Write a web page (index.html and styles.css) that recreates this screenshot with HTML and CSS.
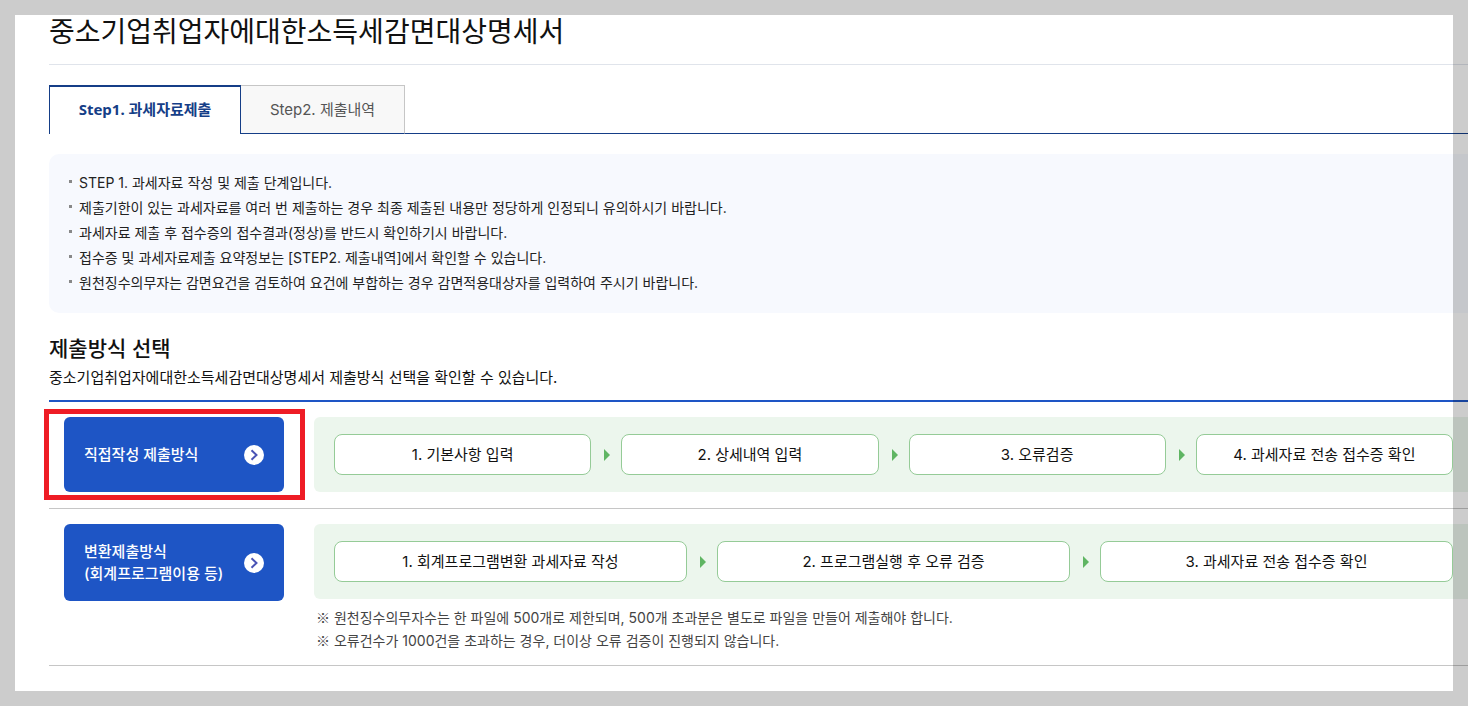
FILE: index.html
```html
<!DOCTYPE html>
<html lang="ko">

<head>
    <meta charset="UTF-8">
    <title>중소기업취업자에대한소득세감면대상명세서</title>
    <link rel="stylesheet" href="styles.css">
</head>

<body>
    <div id="content">
        <h1>중소기업취업자에대한소득세감면대상명세서</h1>

        <div class="tabs">
            <button type="button" class="tab on">Step1. 과세자료제출</button>
            <button type="button" class="tab">Step2. 제출내역</button>
        </div>

        <ul class="info">
            <li>STEP 1. 과세자료 작성 및 제출 단계입니다.</li>
            <li>제출기한이 있는 과세자료를 여러 번 제출하는 경우 최종 제출된 내용만 정당하게 인정되니 유의하시기 바랍니다.</li>
            <li>과세자료 제출 후 접수증의 접수결과(정상)를 반드시 확인하기시 바랍니다.</li>
            <li>접수증 및 과세자료제출 요약정보는 [STEP2. 제출내역]에서 확인할 수 있습니다.</li>
            <li>원천징수의무자는 감면요건을 검토하여 요건에 부합하는 경우 감면적용대상자를 입력하여 주시기 바랍니다.</li>
        </ul>

        <h2>제출방식 선택</h2>
        <p class="desc">중소기업취업자에대한소득세감면대상명세서 제출방식 선택을 확인할 수 있습니다.</p>

        <div class="methods">
            <div class="row">
                <div class="pick marked">
                    <button type="button" class="btn">
                        <span>직접작성 제출방식</span>
                        <svg width="20" height="20" viewBox="0 0 20 20">
                            <circle cx="10" cy="10" r="10" fill="#fff" />
                            <path d="M7.5 5.2l5 4.8-5 4.8" fill="none" stroke="#4a53b5" stroke-width="2" />
                        </svg>
                    </button>
                </div>
                <div class="flow">
                    <ol class="steps">
                        <li>1. 기본사항 입력</li>
                        <li>2. 상세내역 입력</li>
                        <li>3. 오류검증</li>
                        <li>4. 과세자료 전송 접수증 확인</li>
                    </ol>
                </div>
            </div>
            <div class="row">
                <div class="pick">
                    <button type="button" class="btn">
                        <span>변환제출방식<br>(회계프로그램이용 등)</span>
                        <svg width="20" height="20" viewBox="0 0 20 20">
                            <circle cx="10" cy="10" r="10" fill="#fff" />
                            <path d="M7.5 5.2l5 4.8-5 4.8" fill="none" stroke="#4a53b5" stroke-width="2" />
                        </svg>
                    </button>
                </div>
                <div class="flow">
                    <ol class="steps">
                        <li>1. 회계프로그램변환 과세자료 작성</li>
                        <li>2. 프로그램실행 후 오류 검증</li>
                        <li>3. 과세자료 전송 접수증 확인</li>
                    </ol>
                    <div class="notes">
                        <p><span class="mark">※</span> 원천징수의무자수는 한 파일에 500개로 제한되며, 500개 초과분은 별도로 파일을 만들어 제출해야 합니다.</p>
                        <p><span class="mark">※</span> 오류건수가 1000건을 초과하는 경우, 더이상 오류 검증이 진행되지 않습니다.</p>
                    </div>
                </div>
            </div>
        </div>
    </div>
    <div class="frame"></div>
</body>

</html>
```

FILE: styles.css
```css
* {
    box-sizing: border-box;
}

body {
    margin: 0;
    overflow: hidden;
    background-color: #fff;
    color: #111;
    font-family: Inter, "Noto Sans CJK KR", sans-serif;
    font-size: 15px;
}

h1, h2, p, ul, ol {
    margin: 0;
    padding: 0;
    font-weight: normal;
}

ul, ol {
    list-style: none;
}

button {
    font: inherit;
    cursor: pointer;
}

/* runs a little past the right edge of the window */
#content {
    margin: 0 -20px 0 49px;
    padding-top: 12px;
}

/* shaded edge over the whole page */
.frame {
    position: fixed;
    inset: 0;
    border: 15px solid rgba(0, 0, 0, 0.2);
    pointer-events: none;
}

h1 {
    padding-bottom: 12px;
    border-bottom: 1px solid #e0e4eb;
    font-size: 28px;
    line-height: 40px;
}

.tabs {
    display: flex;
    height: 49px;
    margin-top: 20px;
    border-bottom: 1px solid #153e87;
}

.tab {
    height: 49px;
    min-width: 164px;
    padding: 0 20px 2px;
    border: 1px solid #c6c6c6;
    border-left: 0;
    border-bottom-color: #153e87;
    background-color: #f8f8f8;
    color: #555;
}

.tab.on {
    min-width: 192px;
    padding-bottom: 4px;
    border: 1px solid #153e87;
    border-top-width: 2px;
    border-bottom: 0;
    background-color: #fff;
    color: #153e87;
    font-family: "Noto Sans", "Noto Sans CJK KR", sans-serif;
    font-weight: bold;
}

.info {
    margin-top: 20px;
    padding: 16px 20px 18px;
    border-radius: 10px;
    background-color: #f7f9fe;
    color: #222;
    font-size: 14px;
    line-height: 25px;
}

.info li {
    display: flex;
    gap: 7px;
}

.info li::before {
    content: "";
    width: 3px;
    height: 3px;
    margin-top: 10px;
    background-color: #888;
}

h2 {
    margin-top: 22px;
    font-size: 21px;
    font-weight: 500;
    line-height: 28px;
}

.desc {
    line-height: 30px;
}

.methods {
    margin-top: 7px;
    border-top: 2px solid #1e55c5;
}

.row {
    display: flex;
    gap: 30px;
    padding: 15px 15px 13px;
    border-bottom: 1px solid #c6c6c6;
}

.pick {
    position: relative;
    flex: none;
    align-self: flex-start;
    width: 220px;
}

.marked::after {
    content: "";
    position: absolute;
    inset: -8px -21px -8px -20px;
    border: 5px solid #ee1c25;
    pointer-events: none;
}

.btn {
    display: flex;
    align-items: center;
    justify-content: space-between;
    width: 100%;
    min-height: 75px;
    padding: 17px 20px 16px;
    border: 0;
    border-radius: 6px;
    background-color: #1e55c5;
    color: #fff;
    font-weight: 500;
    line-height: 22px;
    text-align: left;
}

.flow {
    flex: 1;
}

.steps {
    display: flex;
    gap: 30px;
    margin-bottom: 3px;
    padding: 17px 20px;
    border-radius: 6px;
    background-color: #ecf6ed;
}

.steps li {
    position: relative;
    flex: 1;
    border: 1px solid #95cb97;
    border-radius: 8px;
    background-color: #fff;
    line-height: 39px;
    text-align: center;
}

.steps li + li::before {
    content: "";
    position: absolute;
    top: 14px;
    left: -18px;
    border: 6px solid transparent;
    border-left-color: #5fb563;
    border-right: 0;
}

.notes {
    padding: 4px 2px 0;
    color: #444;
    font-size: 14px;
    line-height: 23px;
}

.mark {
    font-family: "Noto Sans CJK KR", sans-serif;
}
```
